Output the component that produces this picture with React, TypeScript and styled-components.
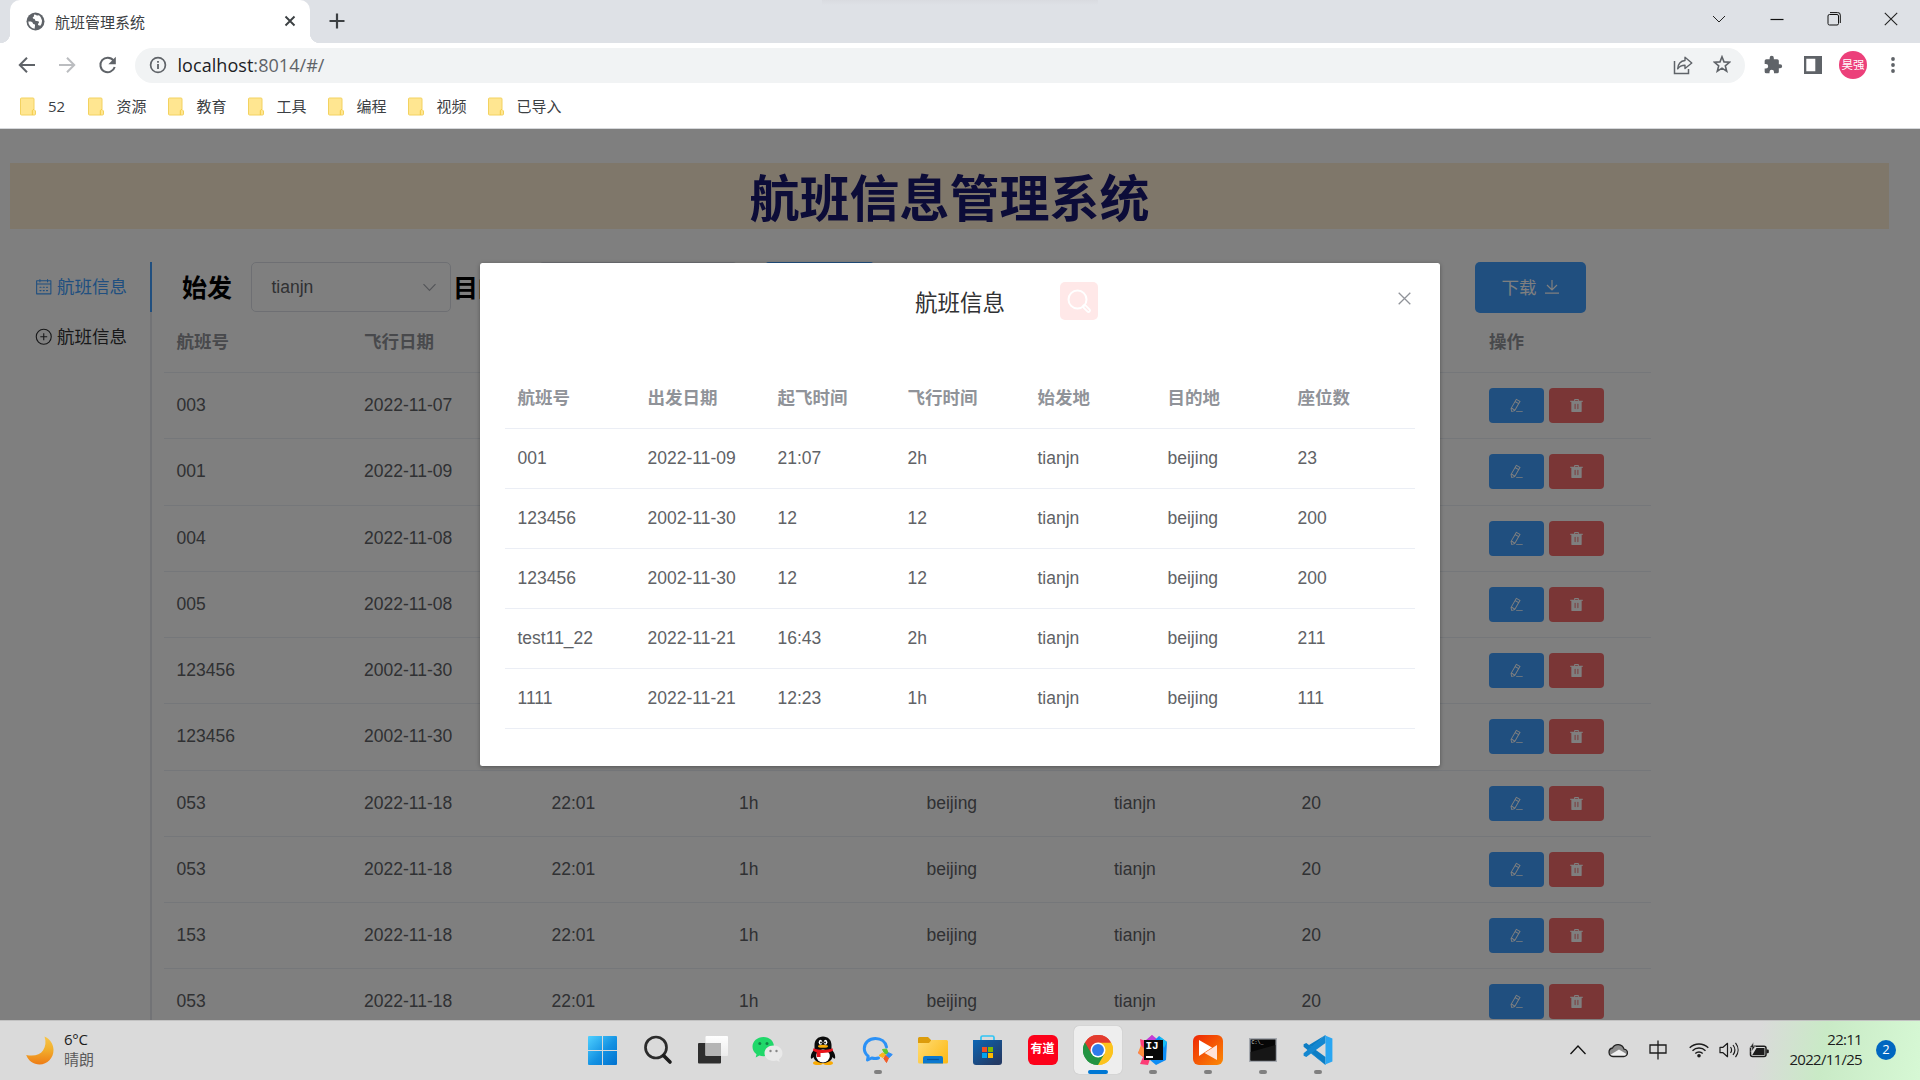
import React from "react";
import styled, { createGlobalStyle } from "styled-components";

const Global = createGlobalStyle`
  * { box-sizing: border-box; }
  body { margin: 0; background: #fff; }
  svg { display: block; flex: none; }
`;

const ui = `"Open Sans", "Noto Sans CJK SC", sans-serif`;
const web = `"Liberation Sans", "Noto Sans CJK SC", sans-serif`;

/* ---------- window ---------- */
const Screen = styled.div`
  width: 1920px;
  height: 1080px;
  overflow: hidden;
  display: flex;
  flex-direction: column;
  font-family: ${ui};
`;
const TabStrip = styled.div`
  height: 43px;
  flex: none;
  background: linear-gradient(#d9dbe0, #dee1e6) 822px 0 / 276px 5px no-repeat, #dee1e6;
  display: flex;
  justify-content: space-between;
  padding-left: 10px;
`;
const TabArea = styled.div`
  display: flex;
  align-items: center;
`;
const Tab = styled.div`
  width: 300px;
  height: 43px;
  background: #fff;
  border-radius: 10px 10px 0 0;
  display: flex;
  align-items: center;
  padding: 0 14px 1px 16px;
  position: relative;
  &::before, &::after {
    content: "";
    position: absolute;
    bottom: 0;
    width: 10px;
    height: 10px;
  }
  &::before { left: -10px; background: radial-gradient(circle at 0 0, #dee1e6 10px, #fff 10.5px); }
  &::after { right: -10px; background: radial-gradient(circle at 100% 0, #dee1e6 10px, #fff 10.5px); }
`;
const TabTitle = styled.div`
  flex: 1;
  margin-left: 10px;
  font-size: 15px;
  line-height: 20px;
  padding-top: 2px;
  color: #3c4043;
`;
const NewTab = styled.div`
  margin: 0 0 1px 19px;
`;
const WindowButtons = styled.div`
  display: flex;
  height: 37px;
`;
const WindowButton = styled.div`
  width: 57.4px;
  display: flex;
  align-items: center;
  justify-content: center;
`;
const Toolbar = styled.div`
  height: 45px;
  flex: none;
  display: flex;
  align-items: center;
  padding: 0 18px 1px 17px;
`;
const NavButtons = styled.div`
  display: flex;
  gap: 20px;
  width: 118px;
`;
const Omnibox = styled.div`
  width: 1610px;
  height: 35px;
  margin-top: 1px;
  border-radius: 18px;
  background: #f1f3f4;
  display: flex;
  align-items: center;
  padding: 0 14px 1px 14px;
`;
const Url = styled.div`
  flex: 1;
  margin-left: 10.5px;
  font-size: 18px;
  letter-spacing: 0.05px;
  line-height: 24px;
  color: #5f6368;
  span { color: #202124; }
`;
const OmniActions = styled.div`
  display: flex;
  gap: 20px;
`;
const Extensions = styled.div`
  flex: 1;
  display: flex;
  align-items: center;
  padding-left: 17.5px;
`;
const Extension = styled.div<{ $gap: number }>`
  margin-right: ${(p) => p.$gap}px;
`;
const Avatar = styled.div`
  width: 28px;
  height: 28px;
  border-radius: 50%;
  background: #ec407a;
  color: #fff;
  font-size: 11.5px;
  line-height: 27px;
  text-align: center;
`;
const Bookmarks = styled.div`
  height: 41px;
  flex: none;
  border-bottom: 1px solid #d5d7da;
  display: flex;
  gap: 21.5px;
  padding: 0 0 4px 19.5px;
  align-items: center;
`;
const Bookmark = styled.div`
  display: flex;
  align-items: center;
  gap: 12.5px;
  min-width: 47px;
  font-size: 15px;
  line-height: 20px;
  color: #3c4043;
`;

/* ---------- web page ---------- */
const Viewport = styled.div`
  height: 891px;
  flex: none;
  position: relative;
  overflow: hidden;
  padding: 34px 31px 0 10px;
  font-family: ${web};
  background: #fff;
`;
const Banner = styled.h1`
  margin: 0;
  height: 66px;
  padding-top: 4px;
  background: #ffefd5;
  color: #191970;
  font-size: 50px;
  line-height: 66px;
  text-align: center;
`;
const Body = styled.div`
  display: flex;
  margin-top: 33px;
`;
const Menu = styled.div`
  width: 142px;
  height: 800px;
  border-right: 2px solid #e4e7ed;
`;
const MenuItem = styled.div<{ $active?: boolean }>`
  height: 50px;
  margin-right: -2px;
  padding-left: 25px;
  display: flex;
  align-items: center;
  gap: 4.5px;
  font-size: 17.5px;
  line-height: 50px;
  color: ${(p) => (p.$active ? "#409eff" : "#303133")};
  border-right: 2px solid ${(p) => (p.$active ? "#409eff" : "transparent")};
`;
const Content = styled.div`
  width: 1499px;
  padding-left: 12px;
`;
const Filters = styled.div`
  display: flex;
  padding-left: 18px;
  height: 51px;
`;
const Label = styled.div<{ $w: number; $pl?: number }>`
  width: ${(p) => p.$w}px;
  padding-left: ${(p) => p.$pl || 0}px;
  white-space: nowrap;
  font-size: 25px;
  font-weight: bold;
  line-height: 52px;
  color: #000;
`;
const Select = styled.div`
  width: 200px;
  height: 50px;
  border: 1px solid #dcdfe6;
  border-radius: 5px;
  padding: 0 13px 0 19.5px;
  display: flex;
  align-items: center;
  justify-content: space-between;
  font-size: 17.5px;
  line-height: 48px;
  color: #606266;
`;
const Primary = styled.div<{ $w: number; $ml: number }>`
  width: ${(p) => p.$w}px;
  margin-left: ${(p) => p.$ml}px;
  height: 51px;
  border-radius: 5px;
  background: #409eff;
  color: #fff;
  display: flex;
  align-items: center;
  justify-content: center;
  gap: 7px;
  padding-bottom: 2px;
  font-size: 17.5px;
`;
const Table = styled.div`
  font-size: 17.5px;
  color: #606266;
`;
const Row = styled.div<{ $h: number; $cols: string; $head?: boolean }>`
  display: grid;
  grid-template-columns: ${(p) => p.$cols};
  align-items: center;
  height: ${(p) => p.$h}px;
  border-bottom: 1px solid #ebeef5;
  color: ${(p) => (p.$head ? "#909399" : "#606266")};
  font-weight: ${(p) => (p.$head ? "bold" : "normal")};
`;
const Cell = styled.div`
  padding-left: 12.5px;
  line-height: 29px;
  white-space: nowrap;
`;
const Actions = styled(Cell)`
  display: flex;
  gap: 5px;
`;
const IconButton = styled.div<{ $bg: string }>`
  width: 55px;
  height: 35px;
  border-radius: 4px;
  background: ${(p) => p.$bg};
  display: flex;
  align-items: center;
  justify-content: center;
`;
const Overlay = styled.div`
  position: absolute;
  inset: 0;
  background: rgba(0, 0, 0, 0.5);
`;
const Dialog = styled.div`
  width: 960px;
  height: 503px;
  margin: 134px 0 0 480px;
  background: #fff;
  border-radius: 2.5px;
  box-shadow: 0 1px 4px rgba(0, 0, 0, 0.35);
  padding: 19px 25px 0;
`;
const DialogHead = styled.div`
  display: grid;
  grid-template-columns: 410px 145px 1fr auto;
  height: 87px;
  align-items: start;
`;
const DialogTitle = styled.div`
  grid-column: 2;
  font-size: 22.5px;
  line-height: 43px;
  color: #303133;
`;
const SearchButton = styled.div`
  width: 38px;
  height: 38px;
  border-radius: 5px;
  background: #ffe8e8;
  display: flex;
  align-items: center;
  justify-content: center;
`;
const CloseDialog = styled.div`
  padding: 10px 4px 0 0;
`;

/* ---------- taskbar ---------- */
const Taskbar = styled.div`
  height: 60px;
  flex: none;
  border-top: 1px solid #c2c2c2;
  padding-bottom: 1px;
  display: grid;
  grid-template-columns: 575px 770px 1fr;
  background: linear-gradient(100deg, #dadada 1735px, #c9eac6 1800px, #d6f8d4 1900px);
`;
const Weather = styled.div`
  display: flex;
  align-items: center;
  gap: 10px;
  padding-left: 26px;
`;
const Stack = styled.div<{ $right?: boolean }>`
  font-size: 15px;
  line-height: 20px;
  padding-bottom: 3px;
  color: #1c1c1c;
  text-align: ${(p) => (p.$right ? "right" : "left")};
  letter-spacing: ${(p) => (p.$right ? -0.7 : -0.3)}px;
`;
const Sky = styled.div`
  color: #5c5c5c;
  letter-spacing: 0;
`;
const Apps = styled.div`
  display: flex;
  align-items: center;
`;
const AppSlot = styled.div<{ $active?: boolean }>`
  width: 48px;
  height: 48px;
  margin: 0 3.5px;
  border-radius: 5px;
  background: ${(p) => (p.$active ? "#eeeeee" : "transparent")};
  box-shadow: ${(p) => (p.$active ? "0 0 1px #aaa" : "none")};
  display: flex;
  align-items: center;
  justify-content: center;
  position: relative;
`;
const Running = styled.div<{ $active?: boolean }>`
  position: absolute;
  bottom: 0;
  left: 50%;
  transform: translateX(-50%);
  width: ${(p) => (p.$active ? 20 : 8)}px;
  height: 4px;
  border-radius: 2px;
  background: ${(p) => (p.$active ? "#0078d4" : "#808080")};
`;
const Youdao = styled.div`
  width: 30px;
  height: 30px;
  border-radius: 6px;
  background: #fc011a;
  color: #fff;
  font-size: 12px;
  font-weight: bold;
  line-height: 28px;
  text-align: center;
`;
const Tray = styled.div`
  display: flex;
  align-items: center;
  justify-content: flex-end;
  padding-right: 24px;
`;
const TrayIcon = styled.div<{ $mr: number }>`
  margin-right: ${(p) => p.$mr}px;
`;
const Badge = styled.div`
  width: 20px;
  height: 20px;
  border-radius: 50%;
  background: #0067c0;
  color: #fff;
  font-size: 13px;
  line-height: 19px;
  text-align: center;
  margin-left: 14px;
`;

/* ---------- icons ---------- */
type SvgProps = { w: number; h?: number; box?: string; children: React.ReactNode };
const Svg = ({ w, h = w, box, children }: SvgProps) => (
  <svg width={w} height={h} viewBox={box || `0 0 ${w} ${h}`} fill="none">
    {children}
  </svg>
);
const Globe = () => (
  <Svg w={19}>
    <circle cx="9.5" cy="9.5" r="9" fill="#5f6368" />
    <path d="M2.3 9.5c2.5 0 3.2-.2 4 .8.9 1 .4 1.800 1.800 2 1.200.1 1 1.300.8 2.300l-.3 2.100A7.200 7.200 0 0 1 2.300 9.500ZM8.200 2.400c-.5 1.500 0 2-1 2.600-.9.500-.4 1.700.7 1.700 1.400 0 .8 1.800 2 2.200 1.500.4 2.900-.2 3.100 1.200.1 1.100-1.500 1.500-.9 2.700.4.700 1.500.7 2 1.100A7.200 7.200 0 0 0 13 3.200l-1.500.4c-1 .2-1.300-1.300-3.300-1.200Z" fill="#fff" />
  </Svg>
);
const Folder = () => (
  <Svg w={16} h={19}>
    <path d="M1.500 1h11.500a1 1 0 0 1 1 1v10.500l1.500 1.500v3a1 1 0 0 1-1 1h-13a1 1 0 0 1-1-1V2a1 1 0 0 1 1-1Z" fill="#ffe691" stroke="#f3d260" />
    <path d="M12.300 18v-4.500l1.700-1.300" stroke="#f3cb45" />
  </Svg>
);
const Calendar = () => (
  <Svg w={17.5} box="0 0 1024 1024">
    <path fill="#409eff" d="M128 384v512h768V192H768v32a32 32 0 1 1-64 0v-32H320v32a32 32 0 0 1-64 0v-32H128v128h768v64H128zm192-256h384V96a32 32 0 1 1 64 0v32h160a32 32 0 0 1 32 32v768a32 32 0 0 1-32 32H96a32 32 0 0 1-32-32V160a32 32 0 0 1 32-32h160V96a32 32 0 0 1 64 0v32zm-32 384h64a32 32 0 0 1 0 64h-64a32 32 0 0 1 0-64zm0 192h64a32 32 0 1 1 0 64h-64a32 32 0 1 1 0-64zm192-192h64a32 32 0 0 1 0 64h-64a32 32 0 0 1 0-64zm0 192h64a32 32 0 1 1 0 64h-64a32 32 0 1 1 0-64zm192-192h64a32 32 0 1 1 0 64h-64a32 32 0 1 1 0-64zm0 192h64a32 32 0 1 1 0 64h-64a32 32 0 1 1 0-64z" />
  </Svg>
);
const CirclePlus = () => (
  <Svg w={17.5} box="0 0 17.5 17.5">
    <circle cx="8.750" cy="8.750" r="7.500" stroke="#303133" strokeWidth="1.100" />
    <path d="M8.750 5.300v6.900M5.300 8.750h6.900" stroke="#303133" strokeWidth="1.100" />
  </Svg>
);
const Pencil = () => (
  <Svg w={15} box="0 0 1024 1024">
    <path fill="#fff" d="m199.04 672.64 193.984 112 224-387.968-193.920-112-224 388.032zm-23.872 60.160 32.896 148.288 144.896-45.696L175.168 732.800zM455.040 229.248l193.920 112 56.704-98.112-193.984-112-56.640 98.112zM104.320 708.800l384-665.024 304.768 175.936L409.152 884.800h.064l-248.448 78.336L104.320 708.800zm384 254.272v-64h448v64h-448z" />
  </Svg>
);
const Trash = () => (
  <Svg w={15} box="0 0 1024 1024">
    <path fill="#fff" d="M352 192V95.936a32 32 0 0 1 32-32h256a32 32 0 0 1 32 32V192h256a32 32 0 1 1 0 64H96a32 32 0 0 1 0-64h256zm64 0h192v-64H416v64zM192 960a32 32 0 0 1-32-32V256h704v672a32 32 0 0 1-32 32H192zm224-192a32 32 0 0 0 32-32V416a32 32 0 0 0-64 0v320a32 32 0 0 0 32 32zm192 0a32 32 0 0 0 32-32V416a32 32 0 0 0-64 0v320a32 32 0 0 0 32 32z" />
  </Svg>
);

const WindowsLogo = () => (
  <Svg w={29}>
    <defs>
      <linearGradient id="win" x1="0" y1="0" x2="29" y2="29" gradientUnits="userSpaceOnUse">
        <stop stopColor="#4fd0ff" />
        <stop offset=".55" stopColor="#1391e2" />
        <stop offset="1" stopColor="#0071cf" />
      </linearGradient>
    </defs>
    <path d="M1 0h13v14H0V1a1 1 0 0 1 1-1ZM15 0h13a1 1 0 0 1 1 1v13H15ZM0 15h14v14H1a1 1 0 0 1-1-1ZM15 15h14v13a1 1 0 0 1-1 1H15Z" fill="url(#win)" />
  </Svg>
);
const SearchLogo = () => (
  <Svg w={30}>
    <circle cx="13" cy="12.500" r="10.500" stroke="#2b2b2b" strokeWidth="2.700" />
    <path d="M20.500 20.500 27 27" stroke="#1d1d1d" strokeWidth="3.600" strokeLinecap="round" />
  </Svg>
);
const TaskView = () => (
  <Svg w={30}>
    <defs><linearGradient id="pane" x1="0" y1="0" x2="0" y2="20" gradientUnits="userSpaceOnUse"><stop stopColor="#fff" /><stop offset="1" stopColor="#ededed" /></linearGradient></defs>
    <rect x="0" y="8" width="23" height="20.500" rx="1" fill="#2e2e2e" />
    <rect x="7.500" y="1" width="22.500" height="20" rx="1" fill="url(#pane)" />
    <path d="M7.500 8H23v13H8.500a1 1 0 0 1-1-1Z" fill="#b5b5b5" />
  </Svg>
);
const WeChat = () => (
  <Svg w={31} h={28}>
    <path d="M11.500 1C5.200 1 .5 5.300.5 10.700c0 3.100 1.500 5.700 4 7.500l-.8 3.200 3.700-1.800c1.300.4 2.600.6 4.100.6C17.800 20.200 22 16 22 10.700S17.800 1 11.500 1Z" fill="#20d86a" />
    <circle cx="7.800" cy="7.500" r="1.500" fill="#108546" /><circle cx="15" cy="7.500" r="1.500" fill="#108546" />
    <path d="M21.500 9.500c-5.200 0-9 3.400-9 7.700s3.800 7.700 9 7.700c1.200 0 2.200-.2 3.200-.5l3 1.500-.7-2.700c2.200-1.400 3.500-3.500 3.500-6 0-4.300-3.800-7.700-9-7.700Z" fill="#e9e9e9" />
    <circle cx="18.500" cy="15" r="1.200" fill="#888" /><circle cx="24.500" cy="15" r="1.200" fill="#888" />
  </Svg>
);
const Penguin = () => (
  <Svg w={26} h={29}>
    <ellipse cx="8" cy="27" rx="5" ry="2" fill="#f9ab05" /><ellipse cx="18" cy="27" rx="5" ry="2" fill="#f9ab05" />
    <path d="M13 .5c-5 0-8.500 3.500-8.500 8.500v4C2.500 15.500.8 18 .8 21c0 2 .8 2.500 2.700 0 .8 3.500 4.500 6 9.500 6s8.700-2.500 9.500-6c1.900 2.500 2.700 2 2.700 0 0-3-1.700-5.500-3.700-8V9C21.500 4 18 .5 13 .5Z" fill="#0b0b0b" />
    <ellipse cx="13" cy="20" rx="6.800" ry="6.500" fill="#fff" />
    <ellipse cx="10.500" cy="6.200" rx="1.800" ry="2.500" fill="#fff" /><ellipse cx="15.500" cy="6.200" rx="1.800" ry="2.500" fill="#fff" />
    <circle cx="11" cy="6.500" r=".9" fill="#000" /><circle cx="15" cy="6.500" r=".9" fill="#000" />
    <ellipse cx="13" cy="10.300" rx="5" ry="1.500" fill="#f9ab05" />
    <path d="M3.500 12.200c5.500 2.300 13.500 2.300 19 0l.5 2.600c-3.500 1.900-8 2.300-12.500 2.100V21H6.800v-4.600L3 14.800Z" fill="#e8141c" />
  </Svg>
);
const BubbleApp = () => (
  <Svg w={31} h={28}>
    <path d="M24.500 11C23.500 5.700 19 2.500 13.500 2.500 7 2.500 2.300 7 2.300 12.500c0 3 1.500 5.800 3.900 7.700l-.7 3.800 4.200-2c2.200.6 4.500.6 6.800 0" stroke="#2b91f6" strokeWidth="3" strokeLinecap="round" strokeLinejoin="round" />
    <path d="m20.500 13.500 4-.500 2 4.700-3.500.300Z" fill="#5ac72e" stroke="#5ac72e" strokeLinejoin="round" />
    <path d="m30.300 18.500-3.300 3.200-3-2 2.500-3Z" fill="#2f8df5" stroke="#2f8df5" strokeLinejoin="round" />
    <path d="m24.500 26.500-2.700-4 1.600-3 3.100 2.500Z" fill="#f25b27" stroke="#f25b27" strokeLinejoin="round" />
    <path d="m17 19.500 3.500-2.500 2.700 1.500-2.300 3Z" fill="#fcb41b" stroke="#fcb41b" strokeLinejoin="round" />
  </Svg>
);
const Explorer = () => (
  <Svg w={30} h={27}>
    <defs><linearGradient id="folder" x1="0" y1="3" x2="30" y2="27" gradientUnits="userSpaceOnUse"><stop stopColor="#ffdc74" /><stop offset="1" stopColor="#fcb813" /></linearGradient></defs>
    <path d="M0 1.500A1.500 1.500 0 0 1 1.500 0H10l3 3v4H0Z" fill="#dc9c0b" />
    <path d="M0 6h11l2.500-3H28.500A1.500 1.500 0 0 1 30 4.500V25a1.500 1.500 0 0 1-1.500 1.500h-27A1.500 1.500 0 0 1 0 25Z" fill="url(#folder)" />
    <path d="M5 26.500V21a2 2 0 0 1 2-2h16a2 2 0 0 1 2 2v5.500Z" fill="#0b78cf" />
    <path d="M9 22.500h12" stroke="#07549b" strokeWidth="1.200" />
  </Svg>
);
const Store = () => (
  <Svg w={29} h={30}>
    <path d="M8 6V2.500A1.500 1.500 0 0 1 9.500 1h10A1.500 1.500 0 0 1 21 2.500V6" stroke="#30c5f5" strokeWidth="1.700" />
    <path d="M0 5h29v22a3 3 0 0 1-3 3H3a3 3 0 0 1-3-3Z" fill="url(#store)" />
    <defs><linearGradient id="store" x1="0" y1="5" x2="20" y2="30" gradientUnits="userSpaceOnUse"><stop stopColor="#0b66b5" /><stop offset="1" stopColor="#233b66" /></linearGradient></defs>
    <path d="M9 12h5v5H9Z" fill="#f25022" /><path d="M15 12h5v5h-5Z" fill="#7fba00" />
    <path d="M9 18h5v5H9Z" fill="#00a4ef" /><path d="M15 18h5v5h-5Z" fill="#ffb900" />
  </Svg>
);
const Chrome = () => (
  <Svg w={30} box="0 0 48 48">
    <path d="M24 24 3.200 12A24 24 0 0 1 44.800 12Z" fill="#e33b2e" />
    <path d="M24 24 44.800 12A24 24 0 0 1 24 48Z" fill="#fcc31e" />
    <path d="M24 24V48A24 24 0 0 1 3.200 12Z" fill="#229342" />
    <path d="M24 12H44.800A24 24 0 0 1 24 48L34.400 30Z" fill="#fcc31e" />
    <path d="M3.200 12 13.600 30 24 36l10.400-6L24 48A24 24 0 0 1 3.200 12Z" fill="#229342" />
    <path d="M24 12H44.800A24 24 0 0 0 3.200 12L13.600 30Z" fill="#e33b2e" />
    <circle cx="24" cy="24" r="12" fill="#fff" /><circle cx="24" cy="24" r="9.500" fill="#2f7bea" />
  </Svg>
);
const IdeaText = styled.div`
  position: absolute;
  left: 15px;
  top: 14px;
  width: 19px;
  height: 20px;
  background: #080808;
  color: #fff;
  font: bold 11px/12px "Liberation Mono", monospace;
  padding-left: 2px;
  &::after {
    content: "";
    display: block;
    width: 7px;
    height: 1.5px;
    margin-top: 4px;
    background: #fff;
  }
`;
const Idea = () => (
  <>
    <Svg w={30}>
      <path d="M2 4 8 6 14 0 18 6 10 30 2 29 5 22 0 18 3 12Z" fill="#fc3d76" />
      <path d="M0 18 3 10l5 6-3 6Z" fill="#fd8f3f" />
      <path d="M8 5 14 0l5 4-3 8Z" fill="#c23cd6" />
      <path d="m17 5 4-4 8 6-1 18-10 5-6-5Z" fill="#0d8df5" />
      <path d="m21 1 8 6-3 6Z" fill="#15bdf4" />
    </Svg>
    <IdeaText>IJ</IdeaText>
  </>
);
const PlayerApp = () => (
  <Svg w={30}>
    <defs><linearGradient id="player" x1="0" y1="0" x2="30" y2="30" gradientUnits="userSpaceOnUse"><stop stopColor="#ee2504" /><stop offset="1" stopColor="#fb8a05" /></linearGradient></defs>
    <rect width="30" height="30" rx="6" fill="url(#player)" />
    <path d="M24 10v15L11.500 18Z" fill="#ffe3d8" />
    <path d="M6 5v16L19 12.500Z" fill="#fff" />
  </Svg>
);
const TermText = styled.div`
  position: absolute;
  left: 13px;
  top: 14px;
  color: #ddd;
  font: 5px/6px "Liberation Mono", monospace;
`;
const Terminal = () => (
  <>
    <Svg w={28} h={24}>
      <rect x=".75" y=".75" width="26.500" height="22.500" fill="#060606" stroke="#a4a8ae" strokeWidth="1.500" />
      <path d="M1.500 14 26.500 7v15.500h-25Z" fill="#161616" />
    </Svg>
    <TermText>C:\_</TermText>
  </>
);
const VsCode = () => (
  <Svg w={30} box="0 0 100 100">
    <path d="M75 0 30 41 11 27 2 31v8l73 61V73L27 38l-7-5Z" fill="#0d7dc4" />
    <path d="M75 100 30 59 11 73 2 69v-8L75 0v27L27 62Z" fill="#1487d0" />
    <path d="M72 1 98 12v76L72 99l3-6V7Z" fill="#2aa6f2" />
  </Svg>
);
const Moon = () => (
  <Svg w={28} h={29}>
    <defs><linearGradient id="moon" x1="14" y1="0" x2="14" y2="29" gradientUnits="userSpaceOnUse"><stop stopColor="#f8c64a" /><stop offset=".45" stopColor="#f1b02e" /><stop offset="1" stopColor="#ee7a14" /></linearGradient></defs>
    <path d="M18.500.5c5.500 2.500 9 7.500 9 13.500 0 8-6 14.500-14 14.500-6 0-11-3.500-13.300-9.500C8 20.500 14 19 17 14.500c2.700-4 3.200-9 1.500-14Z" fill="url(#moon)" />
  </Svg>
);

const apps: { icon: React.ReactNode; running?: boolean; active?: boolean }[] = [
  { icon: <WindowsLogo /> },
  { icon: <SearchLogo /> },
  { icon: <TaskView /> },
  { icon: <WeChat /> },
  { icon: <Penguin /> },
  { icon: <BubbleApp />, running: true },
  { icon: <Explorer /> },
  { icon: <Store /> },
  { icon: <Youdao>有道</Youdao> },
  { icon: <Chrome />, running: true, active: true },
  { icon: <Idea />, running: true },
  { icon: <PlayerApp />, running: true },
  { icon: <Terminal />, running: true },
  { icon: <VsCode />, running: true },
];

const blank = ["", "", "", "", ""];
const flights = [
  ["003", "2022-11-07", ...blank],
  ["001", "2022-11-09", ...blank],
  ["004", "2022-11-08", ...blank],
  ["005", "2022-11-08", ...blank],
  ["123456", "2002-11-30", ...blank],
  ["123456", "2002-11-30", ...blank],
  ["053", "2022-11-18", "22:01", "1h", "beijing", "tianjn", "20"],
  ["053", "2022-11-18", "22:01", "1h", "beijing", "tianjn", "20"],
  ["153", "2022-11-18", "22:01", "1h", "beijing", "tianjn", "20"],
  ["053", "2022-11-18", "22:01", "1h", "beijing", "tianjn", "20"],
];
const results = [
  ["001", "2022-11-09", "21:07", "2h", "tianjn", "beijing", "23"],
  ["123456", "2002-11-30", "12", "12", "tianjn", "beijing", "200"],
  ["123456", "2002-11-30", "12", "12", "tianjn", "beijing", "200"],
  ["test11_22", "2022-11-21", "16:43", "2h", "tianjn", "beijing", "211"],
  ["1111", "2022-11-21", "12:23", "1h", "tianjn", "beijing", "111"],
];
const mainCols = "repeat(7, 187.5px) 1fr";
const dialogCols = "repeat(7, 130px)";

const Chevron = () => (
  <Svg w={15}>
    <path d="m1.500 4.200 6 6.300 6-6.300" stroke="#a8abb2" strokeWidth="1.200" />
  </Svg>
);

export default function App() {
  return (
    <Screen>
      <Global />
      <TabStrip>
        <TabArea>
          <Tab>
            <Globe />
            <TabTitle>航班管理系统</TabTitle>
            <Svg w={12}><path d="m1.500 1.500 9 9m0-9-9 9" stroke="#3c4043" strokeWidth="1.900" /></Svg>
          </Tab>
          <NewTab>
            <Svg w={16}><path d="M8 .5v15M.5 8h15" stroke="#3c4043" strokeWidth="2.200" /></Svg>
          </NewTab>
        </TabArea>
        <WindowButtons>
          <WindowButton><Svg w={14}><path d="m1 4 6 6 6-6" stroke="#222" /></Svg></WindowButton>
          <WindowButton><Svg w={14}><path d="M.5 7.500h13" stroke="#111" strokeWidth="1.200" /></Svg></WindowButton>
          <WindowButton>
            <Svg w={14}>
              <rect x="1" y="2.500" width="10.500" height="10.500" rx="1.500" stroke="#111" />
              <path d="M3 .6h7.500a2.500 2.500 0 0 1 2.800 2.500V11" stroke="#111" />
            </Svg>
          </WindowButton>
          <WindowButton><Svg w={14}><path d="m.8.8 12.400 12.400m0-12.400L.8 13.200" stroke="#222" strokeWidth="1.100" /></Svg></WindowButton>
        </WindowButtons>
      </TabStrip>
      <Toolbar>
        <NavButtons>
          <Svg w={20}><path d="M18 10H3m7-7.200L2.800 10l7.200 7.200" stroke="#5f6368" strokeWidth="2" /></Svg>
          <Svg w={20}><path d="M2 10h15m-7-7.200 7.200 7.200-7.200 7.200" stroke="#bbbdc0" strokeWidth="2" /></Svg>
          <Svg w={20}>
            <path d="M16.500 5.500A7.300 7.300 0 1 0 17.700 12" stroke="#5f6368" strokeWidth="2" />
            <path d="M18.800 1.800v7.400h-7.400Z" fill="#5f6368" />
          </Svg>
        </NavButtons>
        <Omnibox>
          <Svg w={18}>
            <circle cx="9" cy="9" r="7.400" stroke="#5f6368" strokeWidth="1.700" />
            <path d="M9 8v5M9 5v1.800" stroke="#5f6368" strokeWidth="1.800" />
          </Svg>
          <Url><span>localhost</span>:8014/#/</Url>
          <OmniActions>
            <Svg w={20}>
              <path d="M1.500 6v12.500h14V14" stroke="#5f6368" strokeWidth="1.500" />
              <path d="M12 2.300 18.800 8 12 13.500v-3.300c-3.700 0-5.700 1.200-7.300 3.600C5 9.300 7.500 6 12 5.500Z" stroke="#5f6368" strokeWidth="1.400" strokeLinejoin="round" />
            </Svg>
            <Svg w={18} h={19}><path d="m9 1.800 2 5.100 5.500.4-4.200 3.500 1.400 5.400L9 13.200l-4.700 3 1.400-5.400-4.200-3.500L7 6.900Z" stroke="#5f6368" strokeWidth="1.600" /></Svg>
          </OmniActions>
        </Omnibox>
        <Extensions>
          <Extension $gap={21}>
            <Svg w={20} box="0 0 24 24"><path d="M20.500 11H19V7a2 2 0 0 0-2-2h-4V3.500a2.500 2.500 0 0 0-5 0V5H4a2 2 0 0 0-2 2v3.800h1.500a2.700 2.700 0 0 1 0 5.400H2V20a2 2 0 0 0 2 2h3.800v-1.500a2.700 2.700 0 0 1 5.400 0V22H17a2 2 0 0 0 2-2v-4h1.500a2.500 2.500 0 0 0 0-5Z" fill="#5f6368" /></Svg>
          </Extension>
          <Extension $gap={17.5}>
            <Svg w={18}><path fillRule="evenodd" d="M0 0h18v18H0ZM2.300 2.700v12.600h9V2.700Z" fill="#5f6368" /></Svg>
          </Extension>
          <Extension $gap={16.5}>
            <Avatar>昊强</Avatar>
          </Extension>
          <Svg w={18}>{[3, 9, 15].map((y) => <circle key={y} cx="9" cy={y} r="1.900" fill="#5f6368" />)}</Svg>
        </Extensions>
      </Toolbar>
      <Bookmarks>
        {["52", "资源", "教育", "工具", "编程", "视频", "已导入"].map((b) => (
          <Bookmark key={b}><Folder />{b}</Bookmark>
        ))}
      </Bookmarks>

      <Viewport>
        <Banner>航班信息管理系统</Banner>
        <Body>
          <Menu>
            <MenuItem $active><Calendar />航班信息</MenuItem>
            <MenuItem><CirclePlus />航班信息</MenuItem>
          </Menu>
          <Content>
            <Filters>
              <Label $w={69}>始发</Label>
              <Select>tianjn<Chevron /></Select>
              <Label $w={87} $pl={2}>目的</Label>
              <Select />
              <Primary $w={111} $ml={26} />
              <Primary $w={111} $ml={600}>
                下载
                <Svg w={16}><path d="M8 1v9.500M3 6l5 5 5-5M1 14.200h14" stroke="#fff" strokeWidth="1.200" /></Svg>
              </Primary>
            </Filters>
            <Table>
              <Row $h={60} $cols={mainCols} $head>
                {["航班号", "飞行日期", ...blank, "操作"].map((h, i) => <Cell key={i}>{h}</Cell>)}
              </Row>
              {flights.map((f, i) => (
                <Row key={i} $h={66.25} $cols={mainCols}>
                  {f.map((v, j) => <Cell key={j}>{v}</Cell>)}
                  <Actions>
                    <IconButton $bg="#409eff"><Pencil /></IconButton>
                    <IconButton $bg="#f56c6c"><Trash /></IconButton>
                  </Actions>
                </Row>
              ))}
            </Table>
          </Content>
        </Body>
        <Overlay>
          <Dialog>
            <DialogHead>
              <DialogTitle>航班信息</DialogTitle>
              <SearchButton>
                <Svg w={24}>
                  <circle cx="10.500" cy="10.500" r="9" stroke="#fff" strokeWidth="2" />
                  <path d="m17.500 17.500 4 4" stroke="#fff" strokeWidth="4.600" strokeLinecap="round" />
                  <path d="m18 18 3.400 3.400" stroke="#ffe8e8" strokeWidth="1.200" strokeLinecap="round" />
                </Svg>
              </SearchButton>
              <CloseDialog>
                <Svg w={13}><path d="m.7.700 11.600 11.600m0-11.600L.7 12.300" stroke="#909399" strokeWidth="1.300" /></Svg>
              </CloseDialog>
            </DialogHead>
            <Table>
              <Row $h={60} $cols={dialogCols} $head>
                {["航班号", "出发日期", "起飞时间", "飞行时间", "始发地", "目的地", "座位数"].map((h) => <Cell key={h}>{h}</Cell>)}
              </Row>
              {results.map((r, i) => (
                <Row key={i} $h={60} $cols={dialogCols}>
                  {r.map((v, j) => <Cell key={j}>{v}</Cell>)}
                </Row>
              ))}
            </Table>
          </Dialog>
        </Overlay>
      </Viewport>

      <Taskbar>
        <Weather>
          <Moon />
          <Stack>6°C<Sky>晴朗</Sky></Stack>
        </Weather>
        <Apps>
          {apps.map((a, i) => (
            <AppSlot key={i} $active={a.active}>
              {a.icon}
              {a.running && <Running $active={a.active} />}
            </AppSlot>
          ))}
        </Apps>
        <Tray>
          <TrayIcon $mr={22}><Svg w={16}><path d="m.5 12 7.500-8 7.500 8" stroke="#111" strokeWidth="1.300" /></Svg></TrayIcon>
          <TrayIcon $mr={21}>
            <Svg w={20} h={16}>
              <path d="M5 14.500h10.500a3.700 3.700 0 0 0 .5-7.400A6.200 6.200 0 0 0 4.500 6 4.300 4.300 0 0 0 5 14.500Z" fill="#8b8b8b" />
              <path d="M2 13 11 7.500 18.500 12 16 14.500H4Z" fill="#f0f0f0" />
              <path d="M5 14.500h10.500a3.700 3.700 0 0 0 .5-7.400A6.200 6.200 0 0 0 4.500 6 4.300 4.300 0 0 0 5 14.500Z" stroke="#222" strokeWidth="1.300" />
            </Svg>
          </TrayIcon>
          <TrayIcon $mr={22}><Svg w={18} h={20}><path d="M1 5h16v8H1ZM9 .500v19" stroke="#1c1c1c" strokeWidth="1.300" /></Svg></TrayIcon>
          <TrayIcon $mr={10}>
            <Svg w={20} h={16}>
              <path d="M.7 5.800a13.200 13.200 0 0 1 18.600 0M3.500 8.700a9.300 9.300 0 0 1 13 0M6.300 11.500a5.300 5.300 0 0 1 7.400 0" stroke="#1c1c1c" strokeWidth="1.400" />
              <circle cx="10" cy="13.800" r="1.800" fill="#1c1c1c" />
            </Svg>
          </TrayIcon>
          <TrayIcon $mr={10}>
            <Svg w={20} h={18}>
              <path d="M1 6.300h3l4.500-4v13.400L4 11.700H1Z" stroke="#1c1c1c" strokeWidth="1.200" strokeLinejoin="round" />
              <path d="M11.500 6c1.300 1.800 1.300 4.200 0 6M14 4c2.300 3 2.300 7 0 10M16.500 1.800c3.400 4.300 3.400 10 0 14.400" stroke="#1c1c1c" strokeWidth="1.200" />
            </Svg>
          </TrayIcon>
          <TrayIcon $mr={20.5}>
            <Svg w={20} h={16}>
              <rect x="1.500" y="4.200" width="15.500" height="10.300" rx="2" stroke="#1c1c1c" strokeWidth="1.500" />
              <path d="M7.500 6h8v7H3.300Z M17.500 7.500h1.300a1 1 0 0 1 1 1v1.700a1 1 0 0 1-1 1h-1.300Z" fill="#1c1c1c" />
              <path d="M4.500 0 1 5.500h2.200L2 10l4.500-5.700H4.300Z" fill="#1c1c1c" stroke="#dadada" strokeWidth=".5" />
            </Svg>
          </TrayIcon>
          <Stack $right>22:11<br />2022/11/25</Stack>
          <Badge>2</Badge>
        </Tray>
      </Taskbar>
    </Screen>
  );
}
